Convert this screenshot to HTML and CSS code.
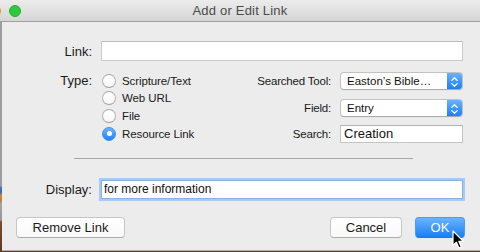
FILE: index.html
```html
<!DOCTYPE html>
<html>
<head>
<meta charset="utf-8">
<title>Add or Edit Link</title>
<link rel="stylesheet" href="styles.css">
</head>
<body>
<div class="window">
  <div class="titlebar">
    <div class="lights">
      <span class="light yellow"></span>
      <span class="light green"></span>
    </div>
    <div class="title">Add or Edit Link</div>
    <div></div>
  </div>
  <div class="main">
    <div class="form-row">
      <span class="lbl">Link:</span>
      <div class="field"></div>
    </div>

    <div class="type-area">
      <div class="type-col">
        <span class="lbl type-lbl">Type:</span>
        <div class="radios">
          <div class="radio-row"><span class="radio"></span><span>Scripture/Text</span></div>
          <div class="radio-row"><span class="radio"></span><span>Web URL</span></div>
          <div class="radio-row"><span class="radio"></span><span>File</span></div>
          <div class="radio-row"><span class="radio checked"></span><span>Resource Link</span></div>
        </div>
      </div>
      <div class="tool-grid">
        <span class="slbl">Searched Tool:</span>
        <div class="popup"><span class="popup-text">Easton’s Bible…</span><span class="stepper"><svg width="15" height="18" viewBox="0 0 15 18"><path d="M4.8 7.4 L7.5 4.8 L10.2 7.4 M4.8 10.6 L7.5 13.2 L10.2 10.6" fill="none" stroke="#fff" stroke-width="1.3" stroke-linecap="round" stroke-linejoin="round"/></svg></span></div>
        <span class="slbl">Field:</span>
        <div class="popup"><span class="popup-text">Entry</span><span class="stepper"><svg width="15" height="18" viewBox="0 0 15 18"><path d="M4.8 7.4 L7.5 4.8 L10.2 7.4 M4.8 10.6 L7.5 13.2 L10.2 10.6" fill="none" stroke="#fff" stroke-width="1.3" stroke-linecap="round" stroke-linejoin="round"/></svg></span></div>
        <span class="slbl">Search:</span>
        <div class="search">Creation</div>
      </div>
    </div>

    <div class="sep"></div>

    <div class="form-row display-row">
      <span class="lbl">Display:</span>
      <div class="field focused">for more information</div>
    </div>

    <div class="buttons">
      <button class="btn remove">Remove Link</button>
      <div class="spacer"></div>
      <button class="btn cancel">Cancel</button>
      <button class="btn ok">OK</button>
    </div>
  </div>
</div>
<svg class="cursor" width="13" height="20" viewBox="0 0 13 20">
  <path d="M1 1 L1 15.5 L4.4 12.3 L6.9 18 L9.3 17 L6.9 11.4 L11.4 11.4 Z" fill="#000" stroke="#fff" stroke-width="1.2" stroke-linejoin="round"/>
</svg>
</body>
</html>
```

FILE: styles.css
```css
* { box-sizing: border-box; }

html, body { margin: 0; padding: 0; }

body {
  width: 480px;
  height: 252px;
  overflow: hidden;
  position: relative;
  font-family: "Liberation Sans", Arial, sans-serif;
  color: #1d1d1d;
  background: linear-gradient(to bottom,
    #9d9d9d 0, #9d9d9d 186px,
    #4f7cc0 187px, #3b68aa 192px,
    #d38a3c 196px, #c47a36 200px,
    #a3a3a3 204px, #979797 220px,
    #7b4a2c 222px, #633a24 252px);
}

.window {
  display: flex;
  flex-direction: column;
  height: 251px;
}

.titlebar {
  height: 22px;
  flex: none;
  display: grid;
  grid-template-columns: 1fr auto 1fr;
  align-items: center;
  background: linear-gradient(to bottom, #ececec, #d5d5d5);
  border-bottom: 1px solid #a0a0a0;
}

.lights {
  display: flex;
  align-items: center;
  gap: 8px;
}

.light {
  width: 12px;
  height: 12px;
  border-radius: 50%;
  display: block;
}

.yellow {
  margin-left: -11px;
  background: #f9b32f;
  border: 1px solid #de9d1e;
}

.green {
  background: #2dc941;
  border: 1px solid #22ae32;
}

.title {
  font-size: 13px;
  line-height: 21px;
  color: #4b4b4b;
  letter-spacing: 0.2px;
}

.main {
  flex: 1;
  margin-left: 2px;
  background: #ececec;
  border-bottom: 1px solid #b1b1b1;
  padding: 19px 17px 0 0;
  display: flex;
  flex-direction: column;
}

.form-row {
  display: flex;
  align-items: flex-start;
  gap: 9px;
}

.lbl {
  width: 90px;
  flex: none;
  text-align: right;
  font-size: 13px;
  line-height: 20px;
  padding-top: 1px;
  color: #1a1a1a;
}

.field {
  flex: 1;
  height: 20px;
  background: #fff;
  border: 1px solid #cacaca;
  border-top-color: #bdbdbd;
  font-size: 12px;
  line-height: 18px;
  padding-left: 2px;
  color: #111;
}

.field.focused {
  border-color: #8ab0e6;
  box-shadow: 0 0 0 2px #a9c8f2;
}

.type-area {
  margin-top: 10px;
  display: flex;
  justify-content: space-between;
  align-items: flex-start;
}

.type-col {
  display: flex;
  gap: 10px;
}

.type-lbl {
  line-height: 17.6px;
  padding-top: 0;
}

.radios {
  display: flex;
  flex-direction: column;
}

.radio-row {
  height: 17.6px;
  display: flex;
  align-items: center;
  gap: 6px;
  font-size: 11.5px;
  letter-spacing: -0.1px;
  color: #1a1a1a;
}

.radio {
  width: 14px;
  height: 14px;
  border-radius: 50%;
  background: linear-gradient(to bottom, #ffffff, #f7f7f7);
  border: 1px solid #b2b2b2;
  border-top-color: #a8a8a8;
  border-bottom-color: #9e9e9e;
  flex: none;
  display: flex;
  align-items: center;
  justify-content: center;
}

.radio.checked {
  background: linear-gradient(to bottom, #6db4fb, #1f82fa);
  border-color: #3a8ef4;
}

.radio.checked::after {
  content: "";
  width: 5px;
  height: 5px;
  border-radius: 50%;
  background: #fff;
}

.tool-grid {
  display: grid;
  grid-template-columns: auto 123px;
  grid-auto-rows: 18px;
  column-gap: 9px;
  row-gap: 8.5px;
  align-items: center;
}

.slbl {
  text-align: right;
  font-size: 11.5px;
  line-height: 18px;
  letter-spacing: -0.2px;
  color: #1a1a1a;
}

.popup {
  height: 18px;
  display: flex;
  background: #fff;
  border: 1px solid #c2c2c2;
  border-bottom-color: #ababab;
  border-radius: 4px;
  overflow: hidden;
  box-shadow: 0 0.5px 0 rgba(0,0,0,0.05);
}

.popup-text {
  flex: 1;
  font-size: 11.5px;
  line-height: 16px;
  padding-left: 6px;
  color: #111;
  white-space: nowrap;
}

.stepper {
  width: 15px;
  flex: none;
  background: linear-gradient(to bottom, #6cb2fb, #1c7ff9);
  display: flex;
}

.search {
  height: 18px;
  background: #fff;
  border: 1px solid #c4c4c4;
  border-top-color: #b4b4b4;
  font-size: 13px;
  line-height: 16px;
  padding-left: 3px;
  color: #111;
}

.sep {
  margin-top: 15px;
  margin-left: 72px;
  width: 339px;
  height: 1px;
  background: #a7a7a7;
}

.display-row {
  margin-top: 20px;
}

.display-row .field {
  margin-top: 1px;
  height: 19px;
  line-height: 17px;
}

.buttons {
  margin-top: 17px;
  margin-right: -2px;
  padding-left: 14px;
  display: flex;
  align-items: center;
}

.spacer { flex: 1; }

.btn {
  height: 21px;
  font-family: "Liberation Sans", Arial, sans-serif;
  font-size: 13px;
  line-height: 19px;
  padding: 0;
  border-radius: 4px;
  background: linear-gradient(to bottom, #ffffff, #f9f9f9);
  border: 1px solid #c6c6c6;
  border-bottom-color: #acacac;
  color: #1a1a1a;
  text-align: center;
}

.remove { width: 109px; }
.cancel { width: 72px; margin-right: 13px; }

.ok {
  width: 50px;
  color: #fff;
  background: linear-gradient(to bottom, #6cb4fb, #197ef9);
  border-color: #4d9bf5;
  border-bottom-color: #2776e0;
}

.cursor {
  position: absolute;
  left: 452px;
  top: 230px;
}
```
